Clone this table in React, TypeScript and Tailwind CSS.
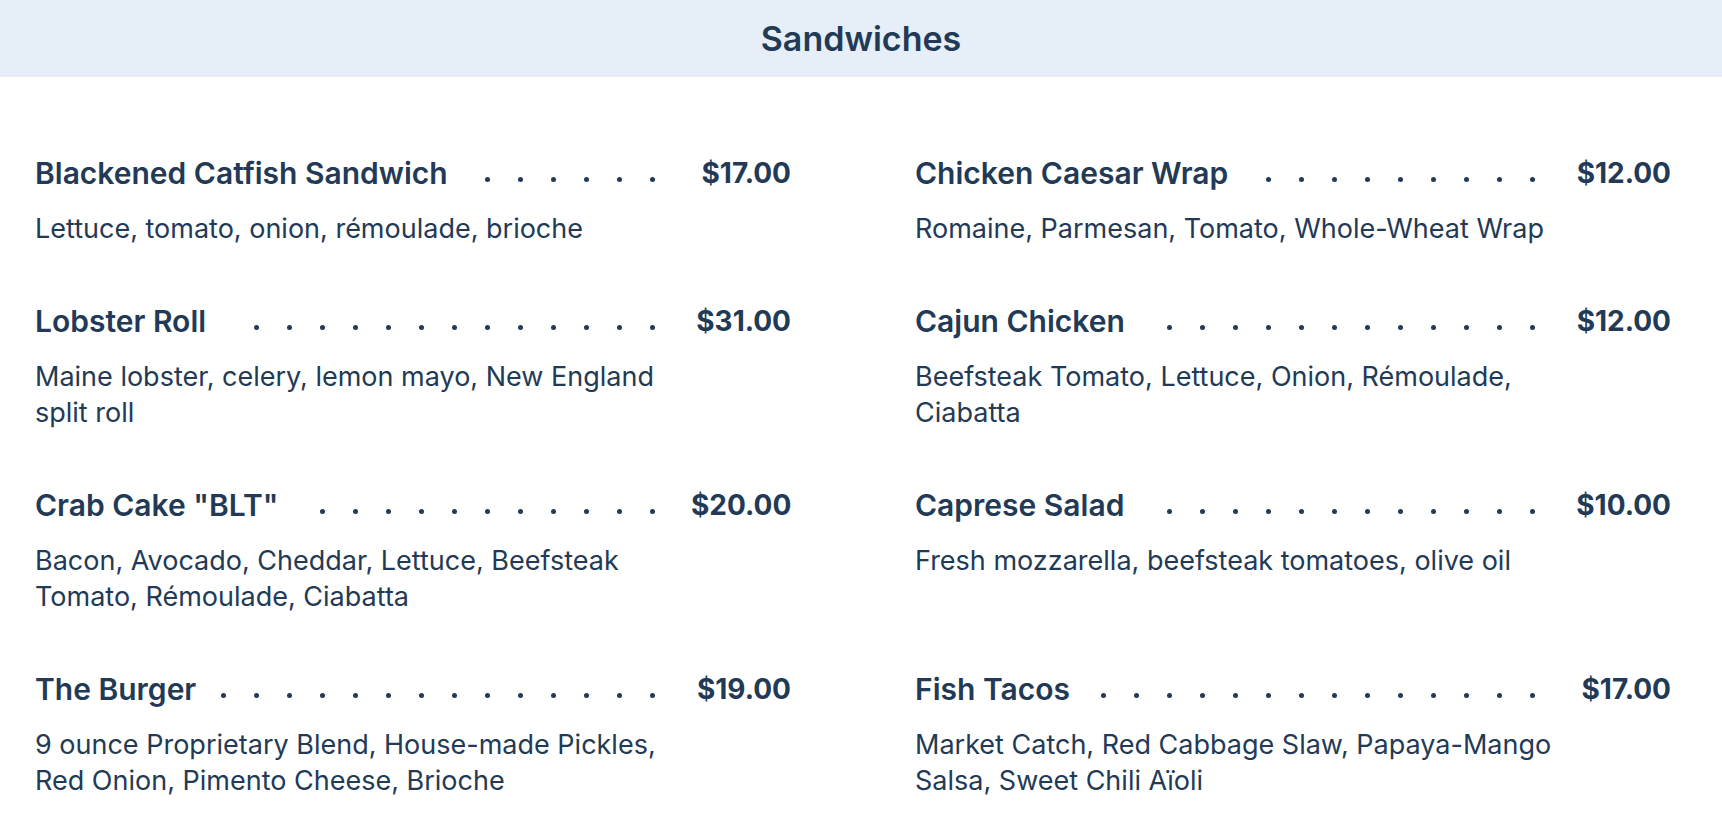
import React from 'react';

interface MenuItem {
    name: string;
    price: string;
    description: string;
}

const items: MenuItem[] = [
    { name: 'Blackened Catfish Sandwich', price: '$17.00', description: 'Lettuce, tomato, onion, rémoulade, brioche' },
    { name: 'Chicken Caesar Wrap', price: '$12.00', description: 'Romaine, Parmesan, Tomato, Whole-Wheat Wrap' },
    { name: 'Lobster Roll', price: '$31.00', description: 'Maine lobster, celery, lemon mayo, New England split roll' },
    { name: 'Cajun Chicken', price: '$12.00', description: 'Beefsteak Tomato, Lettuce, Onion, Rémoulade, Ciabatta' },
    { name: 'Crab Cake "BLT"', price: '$20.00', description: 'Bacon, Avocado, Cheddar, Lettuce, Beefsteak Tomato, Rémoulade, Ciabatta' },
    { name: 'Caprese Salad', price: '$10.00', description: 'Fresh mozzarella, beefsteak tomatoes, olive oil' },
    { name: 'The Burger', price: '$19.00', description: '9 ounce Proprietary Blend, House-made Pickles, Red Onion, Pimento Cheese, Brioche' },
    { name: 'Fish Tacos', price: '$17.00', description: 'Market Catch, Red Cabbage Slaw, Papaya-Mango Salsa, Sweet Chili Aïoli' },
];

const dots = Array.from({ length: 24 });

const MenuRow: React.FC<{ item: MenuItem }> = ({ item }) => (
    <div className="flex items-start">
        <div className="flex-1 min-w-0">
            <div className="flex items-start h-[36px]">
                <h3 className="text-[30px] leading-[36px] font-semibold whitespace-nowrap">{item.name}</h3>
                {/* dot leader: wraps so only whole dots show, packed to the right */}
                <div className="flex-1 min-w-0 ml-[10px] h-[36px] overflow-hidden flex flex-wrap justify-end">
                    {dots.map((_, i) => (
                        <span key={i} className="w-[33px] h-[36px] shrink-0 flex justify-center pt-[22px]">
                            <span className="w-[5px] h-[5px] rounded-full bg-[#233a56]" />
                        </span>
                    ))}
                </div>
            </div>
            <p className="mt-[20px] w-[650px] text-[27px] leading-[36px]">{item.description}</p>
        </div>
        <div className="ml-[22px] w-[100px] text-right text-[28px] leading-[36px] font-bold">{item.price}</div>
    </div>
);

export default function App() {
    return (
        <div className="min-h-screen bg-white text-[#233a56] font-['Inter','Open_Sans',sans-serif]">
            <div className="h-[77px] bg-[#e6eff8] flex items-center justify-center">
                <h2 className="text-[34px] leading-[40px] font-semibold">Sandwiches</h2>
            </div>
            <div className="grid grid-cols-2 gap-x-[124px] gap-y-[56px] pl-[35px] pr-[51px] pt-[78px] pb-[40px]">
                {items.map((item) => (
                    <MenuRow key={item.name} item={item} />
                ))}
            </div>
        </div>
    );
}
